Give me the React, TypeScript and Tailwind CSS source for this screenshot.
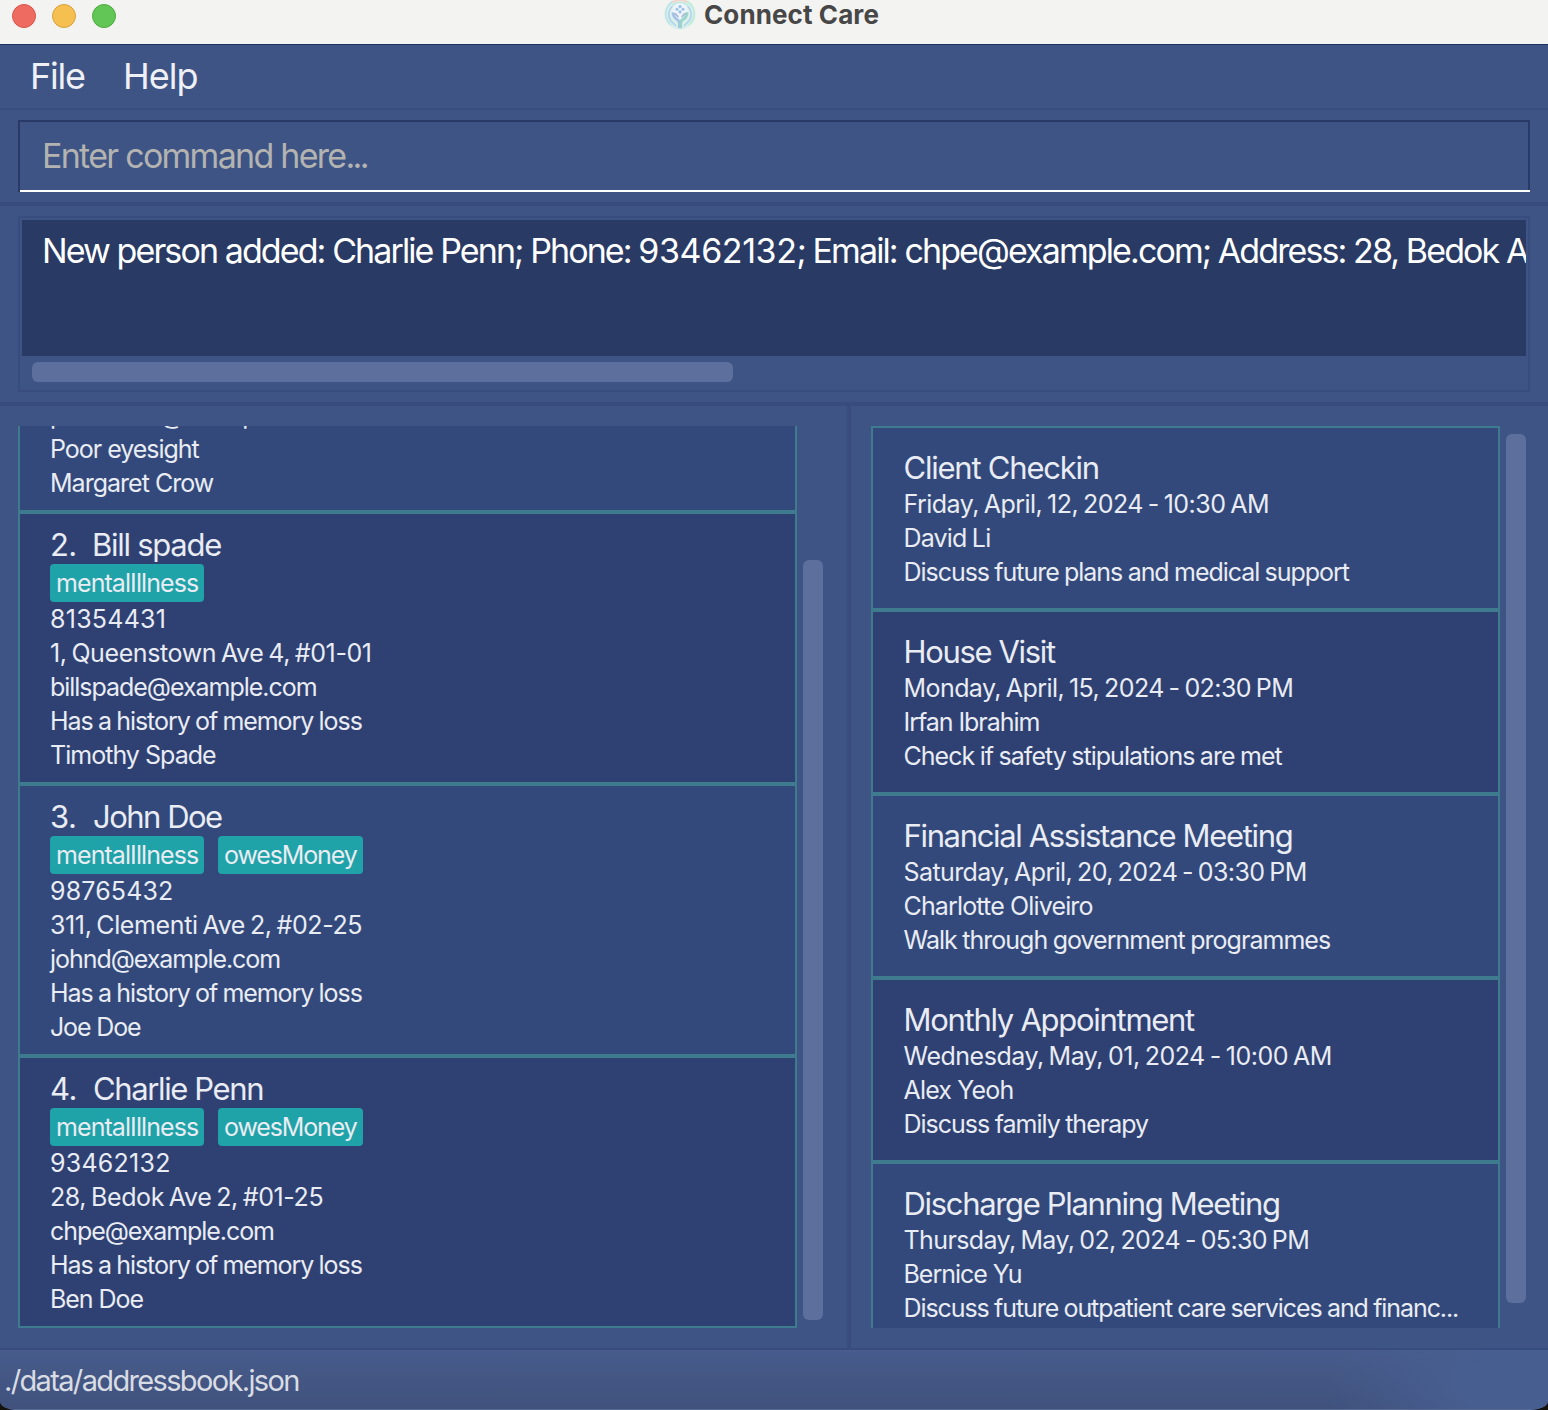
type Line = { text: string; track: string };
type Tag = { text: string; track: string; width: string };
type Person = { id: string; idTrack: string; name: Line; tags: Tag[]; lines: Line[]; bg: string };
type Appointment = { title: Line; lines: Line[]; bg: string };

const ILLNESS: Tag = { text: "mentalIllness", track: "tracking-[-0.92px]", width: "w-[154px]" };
const MONEY: Tag = { text: "owesMoney", track: "tracking-[-1.14px]", width: "w-[145px]" };
const LIGHT = "bg-[#33497b]";
const DARK = "bg-[#2f4173]";

const people: Person[] = [
  {
    id: "2.",
    idTrack: "tracking-[-0.7px]",
    name: { text: "Bill spade", track: "tracking-[-1.26px]" },
    tags: [ILLNESS],
    bg: DARK,
    lines: [
      { text: "81354431", track: "tracking-[0.25px]" },
      { text: "1, Queenstown Ave 4, #01-01", track: "tracking-[-0.4px] [word-spacing:-1.8px]" },
      { text: "billspade@example.com", track: "tracking-[-1.03px]" },
      { text: "Has a history of memory loss", track: "tracking-[-1.07px] [word-spacing:-0.6px]" },
      { text: "Timothy Spade", track: "tracking-[-0.97px]" },
    ],
  },
  {
    id: "3.",
    idTrack: "tracking-[-0.5px]",
    name: { text: "John Doe", track: "ml-px tracking-[-1.5px]" },
    tags: [ILLNESS, MONEY],
    bg: LIGHT,
    lines: [
      { text: "98765432", track: "tracking-[0.15px]" },
      { text: "311, Clementi Ave 2, #02-25", track: "tracking-[-0.38px] [word-spacing:-1.8px]" },
      { text: "johnd@example.com", track: "tracking-[-1.05px]" },
      { text: "Has a history of memory loss", track: "tracking-[-1.07px] [word-spacing:-0.6px]" },
      { text: "Joe Doe", track: "tracking-[-1.15px]" },
    ],
  },
  {
    id: "4.",
    idTrack: "tracking-[-0.5px]",
    name: { text: "Charlie Penn", track: "ml-px tracking-[-1.38px]" },
    tags: [ILLNESS, MONEY],
    bg: DARK,
    lines: [
      { text: "93462132", track: "tracking-[0.25px]" },
      { text: "28, Bedok Ave 2, #01-25", track: "tracking-[-0.39px] [word-spacing:-1.8px]" },
      { text: "chpe@example.com", track: "tracking-[-1.07px]" },
      { text: "Has a history of memory loss", track: "tracking-[-1.07px] [word-spacing:-0.6px]" },
      { text: "Ben Doe", track: "tracking-[-1.05px]" },
    ],
  },
];

const appointments: Appointment[] = [
  {
    title: { text: "Client Checkin", track: "tracking-[-1.22px]" },
    bg: LIGHT,
    lines: [
      { text: "Friday, April, 12, 2024 - 10:30 AM", track: "tracking-[-0.53px] [word-spacing:-1.6px]" },
      { text: "David Li", track: "tracking-[-0.8px] [word-spacing:-1px]" },
      { text: "Discuss future plans and medical support", track: "tracking-[-1.04px] [word-spacing:-0.6px]" },
    ],
  },
  {
    title: { text: "House Visit", track: "tracking-[-1.34px]" },
    bg: DARK,
    lines: [
      { text: "Monday, April, 15, 2024 - 02:30 PM", track: "tracking-[-0.57px] [word-spacing:-1.6px]" },
      { text: "Irfan Ibrahim", track: "tracking-[-1.05px]" },
      { text: "Check if safety stipulations are met", track: "tracking-[-0.97px] [word-spacing:-0.6px]" },
    ],
  },
  {
    title: { text: "Financial Assistance Meeting", track: "tracking-[-1.34px]" },
    bg: LIGHT,
    lines: [
      { text: "Saturday, April, 20, 2024 - 03:30 PM", track: "tracking-[-0.6px] [word-spacing:-1.6px]" },
      { text: "Charlotte Oliveiro", track: "tracking-[-0.85px]" },
      { text: "Walk through government programmes", track: "tracking-[-0.98px] [word-spacing:-0.6px]" },
    ],
  },
  {
    title: { text: "Monthly Appointment", track: "tracking-[-1.28px]" },
    bg: DARK,
    lines: [
      { text: "Wednesday, May, 01, 2024 - 10:00 AM", track: "tracking-[-0.48px] [word-spacing:-1.6px]" },
      { text: "Alex Yeoh", track: "tracking-[-0.83px]" },
      { text: "Discuss family therapy", track: "tracking-[-1px] [word-spacing:-0.6px]" },
    ],
  },
  {
    title: { text: "Discharge Planning Meeting", track: "tracking-[-1.33px]" },
    bg: LIGHT,
    lines: [
      { text: "Thursday, May, 02, 2024 - 05:30 PM", track: "tracking-[-0.6px] [word-spacing:-1.6px]" },
      { text: "Bernice Yu", track: "tracking-[-1.02px]" },
      {
        text: "Discuss future outpatient care services and financ...",
        track: "tracking-[-1.08px] [word-spacing:-0.6px]",
      },
    ],
  },
];

function Logo() {
  return (
    <svg viewBox="0 0 32 32" className="size-8" fill="none" strokeLinecap="round">
      <circle cx="16" cy="15" r="15.5" fill="#dcefec" />
      <path d="M6.500 25.500A14.200 14.200 0 0 1 8 3.200" stroke="#bfe6ea" strokeWidth="2" />
      <path d="M9 2.800Q16 -1 23 2.800" stroke="#f3d6cb" strokeWidth="2" />
      <path d="M24 3.200A14.200 14.200 0 0 1 25.500 25.500" stroke="#bfeddd" strokeWidth="2" />
      <path d="M7 22A11 11 0 0 1 8 7.500M25 22A11 11 0 0 0 24 7.500" stroke="#b0d0ec" strokeWidth="1.500" />
      <path d="M8.500 5.800Q16 .8 23.500 5.800" stroke="#bde8dc" strokeWidth="1.300" />
      <circle cx="16" cy="12" r="7.800" fill="#edf4fa" />
      <g fill="#9dc2e8">
        <circle cx="16" cy="7.600" r="1.600" />
        <circle cx="13" cy="10.300" r="1.500" />
        <circle cx="19" cy="10.300" r="1.500" />
        <circle cx="16" cy="12.900" r="1.600" />
      </g>
      <path d="M9 14.500c.5 3 2 4.800 4.600 6.300 1.500 1 2 4 1.600 7.200" stroke="#a3c2e4" strokeWidth="2.600" />
      <path d="M23 14.500c-.5 3-2 4.800-4.600 6.300-1.500 1-2 4-1.600 7.200" stroke="#9dd5cb" strokeWidth="3" />
      <path d="M11 14.500l3 3M21 14.500l-3 3" stroke="#a5b0cf" strokeWidth="1.500" />
      <path d="M7.500 22.500l4 4M24.500 22.500l-4 4" stroke="#b2dbe8" strokeWidth="1.800" />
    </svg>
  );
}

function TextLine({ line }: { line: Line }) {
  return <div className={`h-[34px] text-[25px] leading-[34px] ${line.track}`}>{line.text}</div>;
}

function PersonCard({ person }: { person: Person }) {
  return (
    <div className={`h-[272px] shrink-0 border-2 border-[#3f7b8f] pt-[11px] pl-[30px] ${person.bg}`}>
      <div className="flex h-[39px] text-[31px] leading-[39px]">
        <span className={`w-[42px] ${person.idTrack}`}>{person.id}</span>
        <span className={person.name.track}>{person.name.text}</span>
      </div>
      <div className="flex gap-[14px]">
        {person.tags.map((t) => (
          <span
            key={t.text}
            className={`h-[38px] rounded-[4px] bg-[#1fa2a8] pl-[6px] text-[25px] leading-[38px] ${t.width} ${t.track}`}
          >
            {t.text}
          </span>
        ))}
      </div>
      {person.lines.map((l) => (
        <TextLine key={l.text} line={l} />
      ))}
    </div>
  );
}

function AppointmentCard({ item }: { item: Appointment }) {
  return (
    <div className={`h-[184px] shrink-0 border-2 border-[#3f7b8f] pt-[21px] pl-[30.5px] ${item.bg}`}>
      <div className={`h-[38px] text-[31px] leading-[38px] ${item.title.track}`}>{item.title.text}</div>
      {item.lines.map((l) => (
        <TextLine key={l.text} line={l} />
      ))}
    </div>
  );
}

export default function App() {
  return (
    <div className="h-[1410px] w-[1548px] overflow-hidden bg-[#15110d] font-['Inter',sans-serif] whitespace-nowrap text-[#e9ecf3]">
      <div className="flex h-full flex-col overflow-hidden [border-radius:0_0_18px_16px/0_0_9px_9px] bg-[#3e5484]">
        <header className="relative h-11 shrink-0 bg-[#f3f3f1]">
          <div className="flex gap-4 pt-1 pl-3">
            <span className="size-6 rounded-full border border-[#d9554b] bg-[#ed6b60]" />
            <span className="size-6 rounded-full border border-[#d9a03c] bg-[#f5c04f]" />
            <span className="size-6 rounded-full border border-[#4cab3c] bg-[#61c655]" />
          </div>
          <div className="absolute top-[-1px] left-[664px] flex items-center gap-2">
            <Logo />
            <span className="text-[26px] leading-8 font-bold tracking-[0.1px] text-[#474747]">Connect Care</span>
          </div>
        </header>

        <nav className="flex h-[66px] shrink-0 border-t border-b-2 border-t-[#1c3161] border-b-[#384c7d] pl-[30px] text-[36px] leading-[63px] text-[#eef0f5]">
          <span className="w-[93px] tracking-[-1.2px]">File</span>
          <span className="tracking-[-1px]">Help</span>
        </nav>

        <div className="h-[96px] shrink-0 border-b-4 border-[#384c7d] px-[18px] pt-[10px]">
          <div className="flex h-[72px] flex-col border-x-2 border-t-2 border-[#293a66]">
            <div className="h-[68px] pl-[22px] text-[34px] leading-[67px] tracking-[-1.72px] text-[#b3b3b1]">
              Enter command here<span className="tracking-[-2.7px]">...</span>
            </div>
            <div className="-mr-0.5 h-0.5 shrink-0 bg-white" />
          </div>
        </div>

        <div className="h-[200px] shrink-0 border-b-4 border-[#384c7d] px-[18px] pt-[10px]">
          <div className="h-[176px] border-2 border-[#384c7d] p-[2px]">
            <div className="h-[136px] overflow-hidden bg-[#293a64] pt-[10px] pl-[20px] text-[34px] leading-[41px] tracking-[-1.9px] text-white">
              New person added: Charlie Penn; Phone: <span className="tracking-[-0.4px]">93462132</span>; Email:
              chpe@example.com; Address: 28, Bedok Ave 2, #01-25
            </div>
            <div className="mt-[6px] ml-[10px] h-5 w-[701px] rounded-[6px] bg-[#5d709d]" />
          </div>
        </div>

        <main className="flex h-[942px] shrink-0">
          <section className="flex w-[851px] gap-[6px] border-r-4 border-[#384c7d] pt-5 pl-[18px]">
            <div className="flex h-[902px] w-[779px] flex-col justify-end overflow-hidden">
              <div className="h-[114px] shrink-0 border-2 border-t-0 border-[#3f7b8f] bg-[#33497b] pl-[30px]">
                <TextLine line={{ text: "petercrow@example.com", track: "tracking-[-1.08px]" }} />
                <TextLine line={{ text: "Poor eyesight", track: "tracking-[-1.02px]" }} />
                <TextLine line={{ text: "Margaret Crow", track: "tracking-[-0.98px]" }} />
              </div>
              {people.map((p) => (
                <PersonCard key={p.id} person={p} />
              ))}
            </div>
            <div className="mt-[134px] h-[760px] w-5 rounded-[6px] bg-[#5d709d]" />
          </section>
          <section className="flex gap-[6px] pt-5 pl-5">
            <div className="flex h-[902px] w-[629px] flex-col overflow-hidden">
              {appointments.map((a) => (
                <AppointmentCard key={a.title.text} item={a} />
              ))}
            </div>
            <div className="mt-2 h-[869px] w-5 rounded-[6px] bg-[#5d709d]" />
          </section>
        </main>

        <footer className="h-[62px] shrink-0 border-t-2 border-b border-t-[#384c7d] border-b-[#566a94] bg-[radial-gradient(ellipse_220px_90px_at_100%_60%,#475e90_40%,transparent),linear-gradient(#475c8c,#40517c)] pl-[4px] text-[29px] leading-[61px] tracking-[-1.65px] text-[#d9dce3]">
          ./data/addressbook.json
        </footer>
      </div>
    </div>
  );
}
